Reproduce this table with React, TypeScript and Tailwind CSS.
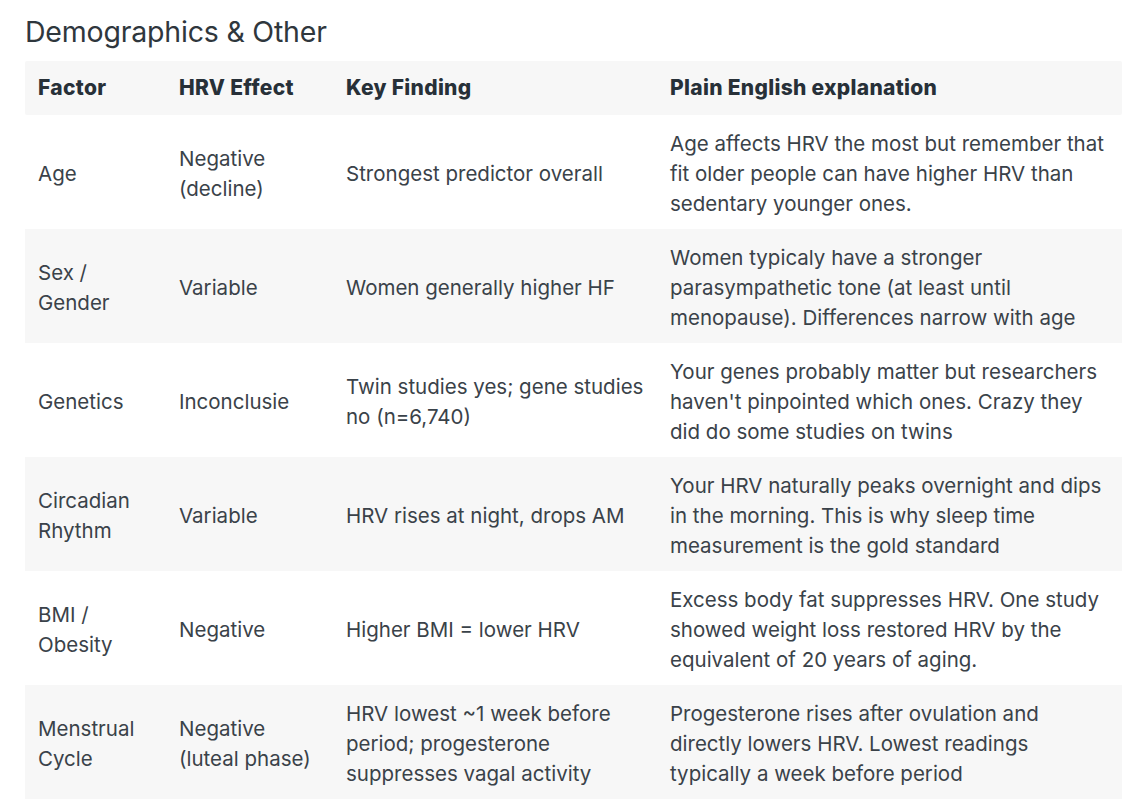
import React from "react";

const rows: { f: string[]; e: string[]; k: string[]; p: string[] }[] = [
  {
    f: ["Age"],
    e: ["Negative", "(decline)"],
    k: ["Strongest predictor overall"],
    p: [
      "Age affects HRV the most but remember that",
      "fit older people can have higher HRV than",
      "sedentary younger ones.",
    ],
  },
  {
    f: ["Sex /", "Gender"],
    e: ["Variable"],
    k: ["Women generally higher HF"],
    p: [
      "Women typicaly have a stronger",
      "parasympathetic tone (at least until",
      "menopause). Differences narrow with age",
    ],
  },
  {
    f: ["Genetics"],
    e: ["Inconclusie"],
    k: ["Twin studies yes; gene studies", "no (n=6,740)"],
    p: [
      "Your genes probably matter but researchers",
      "haven't pinpointed which ones. Crazy they",
      "did do some studies on twins",
    ],
  },
  {
    f: ["Circadian", "Rhythm"],
    e: ["Variable"],
    k: ["HRV rises at night, drops AM"],
    p: [
      "Your HRV naturally peaks overnight and dips",
      "in the morning. This is why sleep time",
      "measurement is the gold standard",
    ],
  },
  {
    f: ["BMI /", "Obesity"],
    e: ["Negative"],
    k: ["Higher BMI = lower HRV"],
    p: [
      "Excess body fat suppresses HRV. One study",
      "showed weight loss restored HRV by the",
      "equivalent of 20 years of aging.",
    ],
  },
  {
    f: ["Menstrual", "Cycle"],
    e: ["Negative", "(luteal phase)"],
    k: ["HRV lowest ~1 week before", "period; progesterone", "suppresses vagal activity"],
    p: [
      "Progesterone rises after ovulation and",
      "directly lowers HRV. Lowest readings",
      "typically a week before period",
    ],
  },
];

function Lines({ lines }: { lines: string[] }) {
  return (
    <>
      {lines.map((l, i) => (
        <div key={i} className="whitespace-nowrap">
          {l}
        </div>
      ))}
    </>
  );
}

const cols = "grid grid-cols-[141px_167px_324px_465px]";

export default function App() {
  return (
    <div
      className="w-[1140px] h-[808px] bg-white overflow-hidden pl-[25px] pr-[18px] pt-[14px]"
      style={{ fontFamily: 'Inter, "Noto Sans", sans-serif' }}
    >
      <h2 className="text-[28.5px] leading-[36px] text-[#2f373d] font-normal tracking-[-0.2px] mb-[11px]">
        Demographics &amp; Other
      </h2>
      <div className="w-[1097px]">
        <div className={`${cols} bg-[#f7f7f7] rounded-[2px] text-[21px] leading-[30px] font-extrabold tracking-[0.3px] text-[#273038]`}>
          <div className="pl-[13px] py-[12px] whitespace-nowrap">Factor</div>
          <div className="pl-[13px] py-[12px] whitespace-nowrap">HRV Effect</div>
          <div className="pl-[13px] py-[12px] whitespace-nowrap">Key Finding</div>
          <div className="pl-[13px] py-[12px] whitespace-nowrap">Plain English explanation</div>
        </div>
        {rows.map((r, i) => (
          <div
            key={i}
            className={`${cols} h-[114px] pt-[4px] items-center text-[20.5px] leading-[30px] text-[#3a4249] ${
              i % 2 === 1 ? "bg-[#f7f7f7]" : "bg-white"
            }`}
          >
            <div className="pl-[13px]">
              <Lines lines={r.f} />
            </div>
            <div className="pl-[13px]">
              <Lines lines={r.e} />
            </div>
            <div className="pl-[13px]">
              <Lines lines={r.k} />
            </div>
            <div className="pl-[13px]">
              <Lines lines={r.p} />
            </div>
          </div>
        ))}
      </div>
    </div>
  );
}
